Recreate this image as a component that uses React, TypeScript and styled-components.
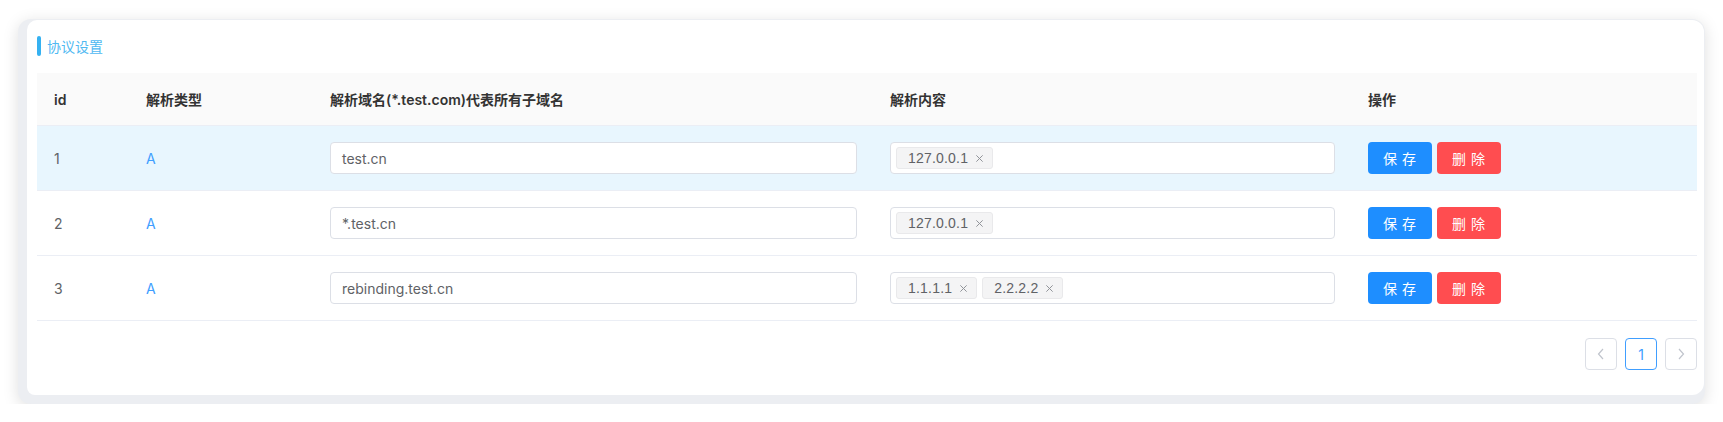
import styled, { createGlobalStyle } from "styled-components";

const GlobalStyle = createGlobalStyle`
  html, body {
    margin: 0;
    padding: 0;
    background: #ffffff;
  }
  body {
    font-family: "Inter", "Noto Sans CJK SC", sans-serif;
    font-size: 14px;
    color: #606266;
  }
`;

const Stage = styled.div`
  padding: 19px 0 0 18px;
`;

const Frame = styled.div`
  width: 1687px;
  height: 385px;
  box-sizing: border-box;
  padding: 1px 1px 9px 9px;
  background: #eceef2;
  border-radius: 13px;
  box-shadow: 0 3px 16px rgba(0, 0, 0, 0.13);
`;

const Panel = styled.div`
  height: 100%;
  box-sizing: border-box;
  background: #ffffff;
  border-radius: 10px 12px 12px 8px;
  padding: 16px 7px 0 10px;
`;

const TitleRow = styled.div`
  display: flex;
  align-items: center;
  height: 20px;
  margin-bottom: 17px;
`;

const TitleBar = styled.span`
  width: 4px;
  height: 20px;
  border-radius: 2px;
  background: #35b1f1;
  margin-right: 6px;
`;

const TitleText = styled.span`
  font-family: "Noto Sans CJK SC", sans-serif;
  font-size: 14px;
  color: #4fb9f2;
`;

const Table = styled.div`
  display: flex;
  flex-direction: column;
`;

const Row = styled.div<{ $head?: boolean; $active?: boolean }>`
  display: grid;
  grid-template-columns: 92px 184px 560px 478px 1fr;
  align-items: center;
  height: ${(p) => (p.$head ? 53 : 65)}px;
  box-sizing: border-box;
  border-bottom: 1px solid #ebeef5;
  background: ${(p) => (p.$head ? "#fafafa" : p.$active ? "#e8f6fe" : "#ffffff")};
`;

const Cell = styled.div<{ $head?: boolean; $link?: boolean }>`
  padding: 0 16px 0 17px;
  font-size: 14px;
  font-weight: ${(p) => (p.$head ? 600 : 400)};
  color: ${(p) => (p.$head ? "#333333" : p.$link ? "#409eff" : "#606266")};
  display: flex;
  align-items: center;
  gap: 5px;
`;

const TextInput = styled.div`
  flex: 1;
  height: 32px;
  box-sizing: border-box;
  border: 1px solid #dcdfe6;
  border-radius: 4px;
  background: #ffffff;
  padding: 0 11px;
  display: flex;
  align-items: center;
  color: #606266;
`;

const TagBox = styled(TextInput)`
  padding: 0 5px;
  gap: 5px;
`;

const Tag = styled.span`
  height: 22px;
  box-sizing: border-box;
  display: inline-flex;
  align-items: center;
  padding: 0 8px 0 11px;
  background: #f4f4f5;
  border: 1px solid #e9e9eb;
  border-radius: 3px;
  color: #606266;
  font-family: "Liberation Sans", sans-serif;
  font-size: 14px;
  letter-spacing: 0.2px;
`;

const TagClose = styled.svg`
  width: 9px;
  height: 9px;
  margin-left: 7px;
`;

const Button = styled.button<{ $danger?: boolean }>`
  width: 64px;
  height: 32px;
  border: none;
  border-radius: 4px;
  padding: 0;
  background: ${(p) => (p.$danger ? "#ff4d50" : "#1e8eff")};
  color: #ffffff;
  font-family: "Noto Sans CJK SC", sans-serif;
  font-size: 14px;
  letter-spacing: 1px;
  white-space: pre;
  cursor: pointer;
`;

const Pager = styled.div`
  display: flex;
  justify-content: flex-end;
  gap: 8px;
  margin-top: 17px;
`;

const PageBtn = styled.div<{ $active?: boolean }>`
  width: 32px;
  height: 32px;
  box-sizing: border-box;
  border: 1px solid ${(p) => (p.$active ? "#409eff" : "#dcdfe6")};
  border-radius: 4px;
  display: flex;
  align-items: center;
  justify-content: center;
  color: #409eff;
  font-size: 14px;
`;

const rows = [
  { id: 1, domain: "test.cn", ips: ["127.0.0.1"] },
  { id: 2, domain: "*.test.cn", ips: ["127.0.0.1"] },
  { id: 3, domain: "rebinding.test.cn", ips: ["1.1.1.1", "2.2.2.2"] },
];

const Close = () => (
  <TagClose viewBox="0 0 10 10">
    <path d="M1.5 1.5 L8.5 8.5 M8.5 1.5 L1.5 8.5" stroke="#909399" strokeWidth="1.1" fill="none" />
  </TagClose>
);

const Chevron = ({ dir }: { dir: "left" | "right" }) => (
  <svg width="8" height="12" viewBox="0 0 8 12">
    <polyline
      points={dir === "left" ? "6,1 1.5,6 6,11" : "2,1 6.5,6 2,11"}
      fill="none"
      stroke="#c0c4cc"
      strokeWidth="1.2"
    />
  </svg>
);

const App = () => {
  return (
    <Stage>
      <GlobalStyle />
      <Frame>
        <Panel>
          <TitleRow>
            <TitleBar />
            <TitleText>协议设置</TitleText>
          </TitleRow>

          <Table>
            <Row $head>
              <Cell $head>id</Cell>
              <Cell $head>解析类型</Cell>
              <Cell $head>解析域名(*.test.com)代表所有子域名</Cell>
              <Cell $head>解析内容</Cell>
              <Cell $head>操作</Cell>
            </Row>
            {rows.map((r, i) => (
              <Row key={r.id} $active={i === 0}>
                <Cell>{r.id}</Cell>
                <Cell $link>A</Cell>
                <Cell>
                  <TextInput>{r.domain}</TextInput>
                </Cell>
                <Cell>
                  <TagBox>
                    {r.ips.map((ip) => (
                      <Tag key={ip}>
                        {ip}
                        <Close />
                      </Tag>
                    ))}
                  </TagBox>
                </Cell>
                <Cell>
                  <Button>保 存</Button>
                  <Button $danger>删 除</Button>
                </Cell>
              </Row>
            ))}
          </Table>

          <Pager>
            <PageBtn>
              <Chevron dir="left" />
            </PageBtn>
            <PageBtn $active>1</PageBtn>
            <PageBtn>
              <Chevron dir="right" />
            </PageBtn>
          </Pager>
        </Panel>
      </Frame>
    </Stage>
  );
};

export default App;
